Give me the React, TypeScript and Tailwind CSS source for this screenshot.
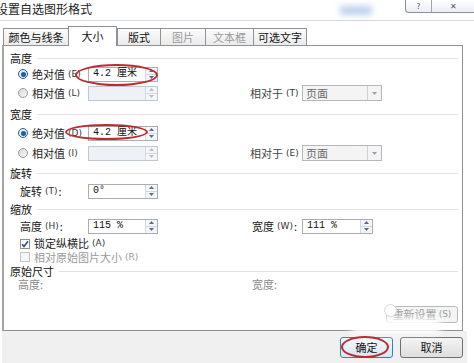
import React from "react";

function Hint({ k }: { k: string }) {
  return <span className="ml-[3px] text-[9px] font-['DejaVu_Sans',sans-serif] text-[#333]">({k})</span>;
}

function Radio({ checked }: { checked?: boolean }) {
  return (
    <div
      className={
        "w-[10px] h-[10px] rounded-full border flex items-center justify-center " +
        (checked ? "border-[#2f5f8f] bg-[#e3ecf5]" : "border-[#9a9a9a] bg-gradient-to-br from-[#d8d8d8] to-[#f8f8f8]")
      }
    >
      {checked ? <div className="w-[5px] h-[5px] rounded-full bg-[#1e5ea3]" /> : null}
    </div>
  );
}

function Arrows({ disabled }: { disabled?: boolean }) {
  const c = disabled ? "#b8bcc4" : "#5a6b85";
  return (
    <div className="w-[12px] h-full border-l border-[#d4d8de] flex flex-col bg-[#f3f5f8]">
      <div className="flex-1 flex items-center justify-center border-b border-[#d4d8de]">
        <svg width="5" height="3" viewBox="0 0 5 3"><path d="M0 3 L2.5 0 L5 3 Z" fill={c} /></svg>
      </div>
      <div className="flex-1 flex items-center justify-center">
        <svg width="5" height="3" viewBox="0 0 5 3"><path d="M0 0 L2.5 3 L5 0 Z" fill={c} /></svg>
      </div>
    </div>
  );
}

function Spin({ value, disabled, w = "w-[70px]" }: { value?: string; disabled?: boolean; w?: string }) {
  return (
    <div
      className={
        w +
        " h-[15px] border flex items-stretch " +
        (disabled ? "border-[#c3c8d0] bg-[#eef1f6]" : "border-[#abadb3] bg-white")
      }
    >
      <div className="flex-1 flex items-center pl-[4px] text-[10px] font-['Liberation_Mono','Noto_Sans_CJK_SC',monospace] text-[#111]">
        {value}
      </div>
      <Arrows disabled={disabled} />
    </div>
  );
}

function Select() {
  return (
    <div className="w-[80px] h-[16px] border border-[#b4b8bd] bg-[#f4f4f4] flex items-stretch">
      <div className="flex-1 flex items-center pl-[3px] text-[#6a6a6a]">页面</div>
      <div className="w-[14px] border-l border-[#cfd2d6] flex items-center justify-center">
        <svg width="5" height="3" viewBox="0 0 5 3"><path d="M0 0 L2.5 3 L5 0 Z" fill="#9aa0a8" /></svg>
      </div>
    </div>
  );
}

function Checkbox({ checked, disabled }: { checked?: boolean; disabled?: boolean }) {
  return (
    <div
      className={
        "w-[10px] h-[10px] border flex items-center justify-center " +
        (disabled ? "border-[#c6c6c6] bg-[#f6f6f6]" : "border-[#8e8f8f] bg-white")
      }
    >
      {checked ? (
        <svg width="8" height="8" viewBox="0 0 8 8">
          <path d="M1 4.2 L3 6.4 L7 1.2" stroke="#2a4f8a" strokeWidth="1.6" fill="none" />
        </svg>
      ) : null}
    </div>
  );
}

function Header({ text, pl = "pl-[6px]" }: { text: string; pl?: string }) {
  return (
    <div className={"h-[14px] flex items-center pr-[4px] " + pl}>
      <span className="inline-block h-[11px] leading-[11px] text-[#111]">{text}</span>
      <div className="flex-1 h-px bg-[#dfe3e8] ml-[5px]" />
    </div>
  );
}

function Tab({ w, label, disabled, last }: { w: string; label: string; disabled?: boolean; last?: boolean }) {
  return (
    <div
      className={
        w +
        " h-[17px] border-t border-l border-[#8e9196] bg-gradient-to-b from-[#fbfbfb] to-[#ebebeb] flex items-center justify-center " +
        (last ? "border-r " : "") +
        (disabled ? "text-[#9a9a9a]" : "text-[#111]")
      }
    >
      {label}
    </div>
  );
}

function Ellipse({ cls }: { cls: string }) {
  return <div className={"absolute border-2 border-[#bd2a2f] rounded-[50%] pointer-events-none " + cls} />;
}

export default function App() {
  return (
    <div className="w-[474px] h-[363px] bg-white overflow-hidden relative font-['Noto_Sans_CJK_SC',sans-serif] text-[11px] text-[#1a1a1a] leading-none">
      {/* title bar */}
      <div className="h-[21px] flex items-start justify-between border-b border-[#d3d9e1] relative">
        <div className="ml-[-4px] mt-[3px] text-[12px] text-[#222]">设置自选图形格式</div>
        <div className="absolute left-[340px] top-[6px] w-[32px] h-[9px] bg-[#bcd2ec] blur-[3px]" />
        <div className="flex h-[13px] w-[69px] border-l border-b border-[#8a8f99] rounded-bl-[4px] bg-gradient-to-b from-white to-[#e9eef5] text-[8px] text-[#555]">
          <div className="w-[25px] flex items-center justify-center">?</div>
          <div className="flex-1 border-l border-[#a0a5ae] flex items-center justify-center">✕</div>
        </div>
      </div>

      {/* tabs */}
      <div className="h-[24px] flex items-end pl-[3px] relative z-10">
        <Tab w="w-[65px]" label="颜色与线条" />
        <div className="w-[49px] h-[20px] -mb-px bg-white border border-b-0 border-[#8e9196] flex items-center justify-center text-[#111]">
          大小
        </div>
        <Tab w="w-[43px]" label="版式" />
        <Tab w="w-[45px]" label="图片" disabled />
        <Tab w="w-[48px]" label="文本框" disabled />
        <Tab w="w-[54px]" label="可选文字" last />
      </div>

      {/* panel */}
      <div className="h-[286px] ml-[2px] mr-[11px] border border-[#8e9196] border-l-2 border-l-[#a5a5a5] bg-white flex flex-col pt-[5px]">
        <Header text="高度" />
        <div className="h-[18px] flex items-center pl-[14px]">
          <div className="w-[70px] flex items-center">
            <Radio checked />
            <span className="ml-[4px]">绝对值</span>
            <Hint k="E" />
          </div>
          <Spin value="4.2 厘米" />
        </div>
        <div className="h-[18px] mt-[1px] flex items-center pl-[14px]">
          <div className="w-[70px] flex items-center">
            <Radio />
            <span className="ml-[4px]">相对值</span>
            <Hint k="L" />
          </div>
          <Spin disabled />
          <div className="ml-[92px] w-[52px] flex items-center text-[#444]">
            相对于
            <Hint k="T" />
          </div>
          <Select />
        </div>

        <div className="mt-[5px]">
          <Header text="宽度" />
        </div>
        <div className="h-[18px] mt-[3px] flex items-center pl-[14px]">
          <div className="w-[70px] flex items-center">
            <Radio checked />
            <span className="ml-[4px]">绝对值</span>
            <Hint k="D" />
          </div>
          <Spin value="4.2 厘米" />
        </div>
        <div className="h-[18px] mt-[2px] flex items-center pl-[14px]">
          <div className="w-[70px] flex items-center">
            <Radio />
            <span className="ml-[4px]">相对值</span>
            <Hint k="I" />
          </div>
          <Spin disabled />
          <div className="ml-[92px] w-[52px] flex items-center text-[#444]">
            相对于
            <Hint k="E" />
          </div>
          <Select />
        </div>

        <div className="mt-[4px]">
          <Header text="旋转" />
        </div>
        <div className="h-[18px] mt-[2px] flex items-center pl-[16px]">
          <div className="w-[68px] flex items-center">
            旋转
            <Hint k="T" />
            <span className="ml-[1px]">:</span>
          </div>
          <Spin value="0°" />
        </div>

        <div className="mt-[2px]">
          <Header text="缩放" />
        </div>
        <div className="h-[18px] mt-[1px] flex items-center pl-[16px]">
          <div className="w-[68px] flex items-center">
            高度
            <Hint k="H" />
            <span className="ml-[1px]">:</span>
          </div>
          <Spin value="115 %" />
          <div className="ml-[94px] w-[50px] flex items-center">
            宽度
            <Hint k="W" />
            <span className="ml-[1px]">:</span>
          </div>
          <Spin value="111 %" w="w-[71px]" />
        </div>
        <div className="h-[13px] mt-[2px] flex items-center pl-[16px]">
          <Checkbox checked />
          <span className="ml-[4px] inline-block h-[11px] leading-[11px]">锁定纵横比</span>
          <Hint k="A" />
        </div>
        <div className="h-[14px] flex items-center pl-[16px] text-[#9a9a9a]">
          <Checkbox disabled />
          <span className="ml-[4px] inline-block h-[11px] leading-[11px]">相对原始图片大小</span>
          <span className="ml-[3px] text-[9px] font-['DejaVu_Sans',sans-serif]">(R)</span>
        </div>
        <Header text="原始尺寸" />
        <div className="h-[13px] flex items-center pl-[14px] text-[#8a8a8a]">
          <span className="w-[234px] inline-block h-[11px] leading-[11px]">高度:</span>
          <span className="inline-block h-[11px] leading-[11px]">宽度:</span>
        </div>
        <div className="mt-[15px] flex justify-end pr-[4px]">
          <div className="w-[72px] h-[17px] border border-[#b8b8b8] rounded-[3px] bg-[#f4f4f4] flex items-center justify-center text-[#9a9a9a]">
            重新设置<span className="ml-[2px] text-[9px] font-['DejaVu_Sans',sans-serif]">(S)</span>
          </div>
        </div>
      </div>

      {/* bottom bar */}
      <div className="h-[33px] ml-[2px] mr-[7px] bg-[#f0f0f0] flex items-center justify-end gap-[7px] pr-[4px]">
        <div className="w-[53px] h-[21px] border border-[#3c7fb1] rounded-[3px] bg-gradient-to-b from-[#f4f9fd] to-[#d9e6f1] flex items-center justify-center text-[#111]">
          确定
        </div>
        <div className="w-[63px] h-[21px] border border-[#707070] rounded-[3px] bg-gradient-to-b from-[#f4f4f4] to-[#dedede] flex items-center justify-center text-[#111]">
          取消
        </div>
      </div>

      {/* watermark blur */}
      <div className="absolute left-[350px] top-[318px] w-[92px] h-[16px] bg-white/95 rounded-[8px] blur-[3px]" />
      <div className="absolute left-[384px] top-[304px] w-[13px] h-[13px] bg-white rounded-full border border-[#d8d8d8]" />

      {/* annotations */}
      <Ellipse cls="left-[69px] top-[27px] w-[49px] h-[18px]" />
      <Ellipse cls="left-[75px] top-[64px] w-[83px] h-[22px]" />
      <Ellipse cls="left-[65px] top-[124px] w-[83px] h-[16px]" />
      <Ellipse cls="left-[341px] top-[336px] w-[48px] h-[22px]" />
    </div>
  );
}
